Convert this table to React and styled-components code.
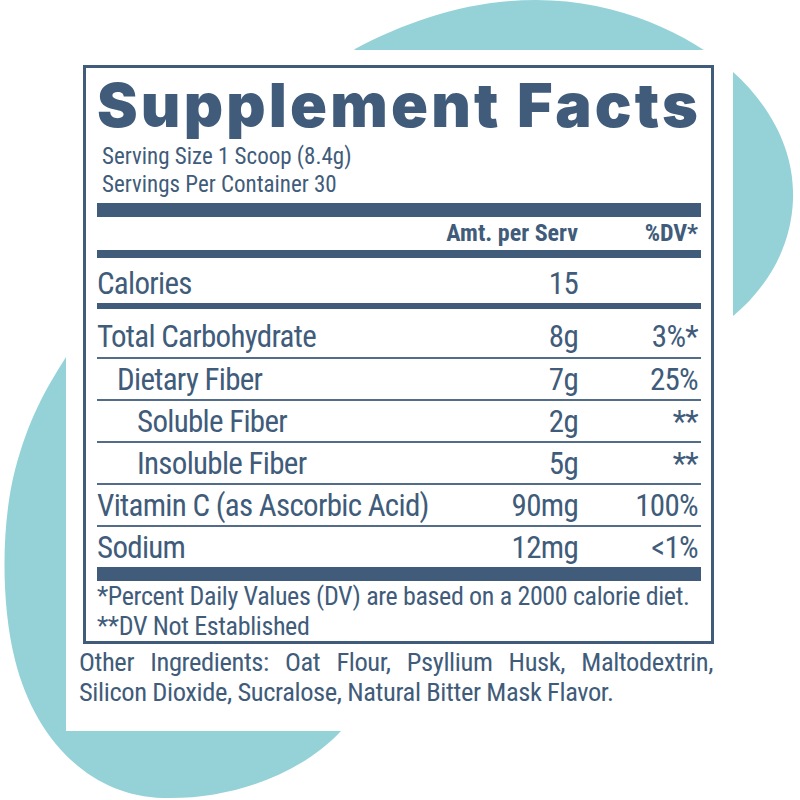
import React from 'react';
import styled, { createGlobalStyle } from 'styled-components';

const NAVY = '#405c7a';
const TEAL = '#94d2d8';

const GlobalStyle = createGlobalStyle`
  body {
    margin: 0;
    background: #fff;
  }
  * {
    box-sizing: border-box;
  }
`;

const Page = styled.div`
  position: relative;
  width: 800px;
  height: 800px;
  overflow: hidden;
  background: #fff;
  padding: 50px 0 0 66px;
`;

const Blob = styled.svg`
  position: absolute;
  top: 0;
  left: 0;
`;

const Panel = styled.div`
  position: relative;
  width: 667px;
  height: 681px;
  background: #fff;
  padding: 15px 20px 0 13px;
  color: ${NAVY};
  font-family: Roboto, "Liberation Sans", sans-serif;
  font-stretch: 83%;
`;

const Label = styled.div`
  margin-left: 4px;
  width: 631px;
  border: 3px solid ${NAVY};
  padding: 0 10px 0 11px;
`;

const Title = styled.h1`
  margin: 0;
  padding-top: 7px;
  height: 75px;
  font-family: Inter, "Liberation Sans", sans-serif;
  font-stretch: normal;
  font-weight: 900;
  font-size: 61px;
  line-height: 60px;
  letter-spacing: 3.2px;
  white-space: nowrap;
`;

const Serving = styled.div`
  padding-left: 5px;
  font-size: 23px;
  line-height: 28px;
`;

const Bar = styled.div`
  height: ${(p) => p.$h}px;
  background: ${NAVY};
  margin-top: ${(p) => p.$mt || 0}px;
`;

const Line = styled.div`
  height: 2px;
  background: ${NAVY};
  opacity: 0.9;
`;

const Row = styled.div`
  display: grid;
  grid-template-columns: minmax(0, 1fr) 150px 123px;
  height: ${(p) => p.$h || 40}px;
  padding-top: ${(p) => p.$pt ?? 1}px;
  font-size: ${(p) => p.$fs || 31}px;
  font-weight: ${(p) => (p.$bold ? 700 : 400)};
  line-height: ${(p) => p.$lh || 39}px;
  letter-spacing: ${(p) => (p.$bold ? 0 : -0.7)}px;
  white-space: nowrap;
`;

const Name = styled.span`
  padding-left: ${(p) => p.$indent || 0}px;
`;

const Amount = styled.span`
  text-align: right;
`;

const Dv = styled.span`
  text-align: right;
  padding-right: 3px;
`;

const Footnote = styled.div`
  font-size: 26px;
  line-height: 30px;
  letter-spacing: -0.35px;
  white-space: nowrap;
`;

const Ingredients = styled.p`
  margin: 3px 0 0;
  font-size: 26.5px;
  line-height: 30px;
  letter-spacing: -0.4px;
  text-align: justify;
`;

const rows = [
  { name: 'Dietary Fiber', amt: '7g', dv: '25%', indent: 20 },
  { name: 'Soluble Fiber', amt: '2g', dv: '**', indent: 40 },
  { name: 'Insoluble Fiber', amt: '5g', dv: '**', indent: 40 },
  { name: 'Vitamin C (as Ascorbic Acid)', amt: '90mg', dv: '100%' },
  { name: 'Sodium', amt: '12mg', dv: '<1%' },
];

export default function App() {
  return (
    <Page>
      <GlobalStyle />
      <Blob width="800" height="800" viewBox="0 0 800 800">
        <path
          fill={TEAL}
          d="M 536 0 C 620 0 690 35 732 71 C 770 105 795 150 793 200 C 791 250 765 290 732 317 L 341 731 C 300 775 230 800 163 798 C 90 796 35 740 15 660 C 0 600 2 520 15 470 C 28 420 45 390 66 357 L 355 49 C 410 20 470 0 536 0 Z"
        />
      </Blob>
      <Panel>
        <Label>
          <Title>Supplement Facts</Title>
          <Serving>Serving Size 1 Scoop (8.4g)</Serving>
          <Serving>Servings Per Container 30</Serving>
          <Bar $h={14} $mt={4} />
          <Row $h={33} $pt={0} $fs={24} $lh={33} $bold>
            <span />
            <Amount>Amt. per Serv</Amount>
            <Dv>%DV*</Dv>
          </Row>
          <Bar $h={8} />
          <Row $h={45} $pt={6}>
            <Name>Calories</Name>
            <Amount>15</Amount>
            <Dv />
          </Row>
          <Bar $h={6} />
          <Row $h={48} $pt={8}>
            <Name>Total Carbohydrate</Name>
            <Amount>8g</Amount>
            <Dv>3%*</Dv>
          </Row>
          {rows.map((r) => (
            <React.Fragment key={r.name}>
              <Line />
              <Row>
                <Name $indent={r.indent}>{r.name}</Name>
                <Amount>{r.amt}</Amount>
                <Dv>{r.dv}</Dv>
              </Row>
            </React.Fragment>
          ))}
          <Bar $h={14} />
          <Footnote>*Percent Daily Values (DV) are based on a 2000 calorie diet.</Footnote>
          <Footnote>**DV Not Established</Footnote>
        </Label>
        <Ingredients>
          Other Ingredients: Oat Flour, Psyllium Husk, Maltodextrin, Silicon Dioxide, Sucralose, Natural Bitter Mask Flavor.
        </Ingredients>
      </Panel>
    </Page>
  );
}
